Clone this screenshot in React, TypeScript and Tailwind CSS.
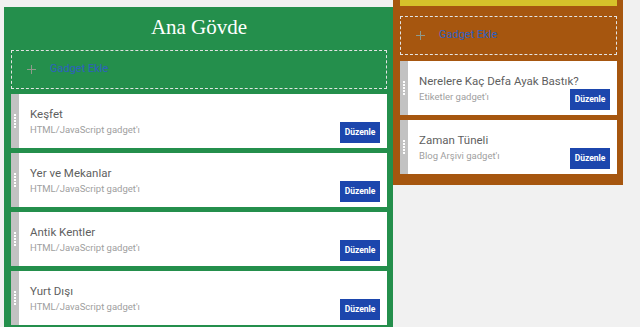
import React from 'react';

type Gadget = { title: string; kind: string };

const mainGadgets: Gadget[] = [
  { title: 'Keşfet', kind: "HTML/JavaScript gadget'ı" },
  { title: 'Yer ve Mekanlar', kind: "HTML/JavaScript gadget'ı" },
  { title: 'Antik Kentler', kind: "HTML/JavaScript gadget'ı" },
  { title: 'Yurt Dışı', kind: "HTML/JavaScript gadget'ı" },
];

const sideGadgets: Gadget[] = [
  { title: 'Nerelere Kaç Defa Ayak Bastık?', kind: "Etiketler gadget'ı" },
  { title: 'Zaman Tüneli', kind: "Blog Arşivi gadget'ı" },
];

const AddGadget = () => (
  <div className="flex h-[39px] items-center border border-dashed border-[#e4e4e4]">
    <span className="relative ml-[15px] flex h-[9px] w-[9px] items-center justify-center">
      <span className="absolute h-[1.5px] w-[9px] bg-[#8f9a8c]" />
      <span className="absolute h-[9px] w-[1.5px] bg-[#8f9a8c]" />
    </span>
    <span className="ml-[14px] text-[11px] text-[#2d5fc0]">Gadget Ekle</span>
  </div>
);

const GadgetCard = ({ gadget }: { gadget: Gadget }) => (
  <div className="flex h-[54px] bg-white">
    {/* sürükleme tutamacı */}
    <div className="flex w-[8px] shrink-0 flex-col items-center justify-center gap-[1px] bg-[#c2c2c2]">
      {[0, 1, 2, 3, 4].map((i) => (
        <span key={i} className="h-[2px] w-[2px] bg-white" />
      ))}
    </div>
    <div className="flex min-w-0 flex-1 items-end justify-between pl-[11px] pr-[7px] pb-[5px]">
      <div className="min-w-0 flex-1 self-start whitespace-nowrap pt-[12px]">
        <div className="text-[11.5px] leading-[16px] text-[#5f5f5f]">{gadget.title}</div>
        <div className="mt-[1px] text-[9.5px] leading-[14px] text-[#a0a0a0]">{gadget.kind}</div>
      </div>
      <button className="h-[21px] w-[40px] shrink-0 bg-[#1c46ad] text-[8.5px] font-bold text-white">
        Düzenle
      </button>
    </div>
  </div>
);

export default function App() {
  return (
    <div
      className="flex h-[327px] w-[640px] overflow-hidden bg-[#f1f1f1]"
      style={{ fontFamily: 'Roboto, "Noto Sans", sans-serif' }}
    >
      <div className="ml-[4px] mt-[7px] flex w-[389px] shrink-0 flex-col bg-[#248f4c] pl-[7px] pr-[6px]">
        <div
          className="flex h-[43px] items-center justify-center pb-[1px] text-[21px] text-white"
          style={{ fontFamily: '"Liberation Serif", serif' }}
        >
          Ana Gövde
        </div>
        <AddGadget />
        <div className="mt-[5px] flex flex-col gap-[5px]">
          {mainGadgets.map((g) => (
            <GadgetCard key={g.title} gadget={g} />
          ))}
        </div>
      </div>
      <div className="flex h-[185px] w-[230px] shrink-0 flex-col self-start bg-[#a6560f] pl-[7px] pr-[6px]">
        <div className="h-[6px] bg-[#d6c22a]" />
        <div className="mt-[10px]">
          <AddGadget />
        </div>
        <div className="mt-[6px] flex flex-col gap-[5px]">
          {sideGadgets.map((g) => (
            <GadgetCard key={g.title} gadget={g} />
          ))}
        </div>
      </div>
    </div>
  );
}
